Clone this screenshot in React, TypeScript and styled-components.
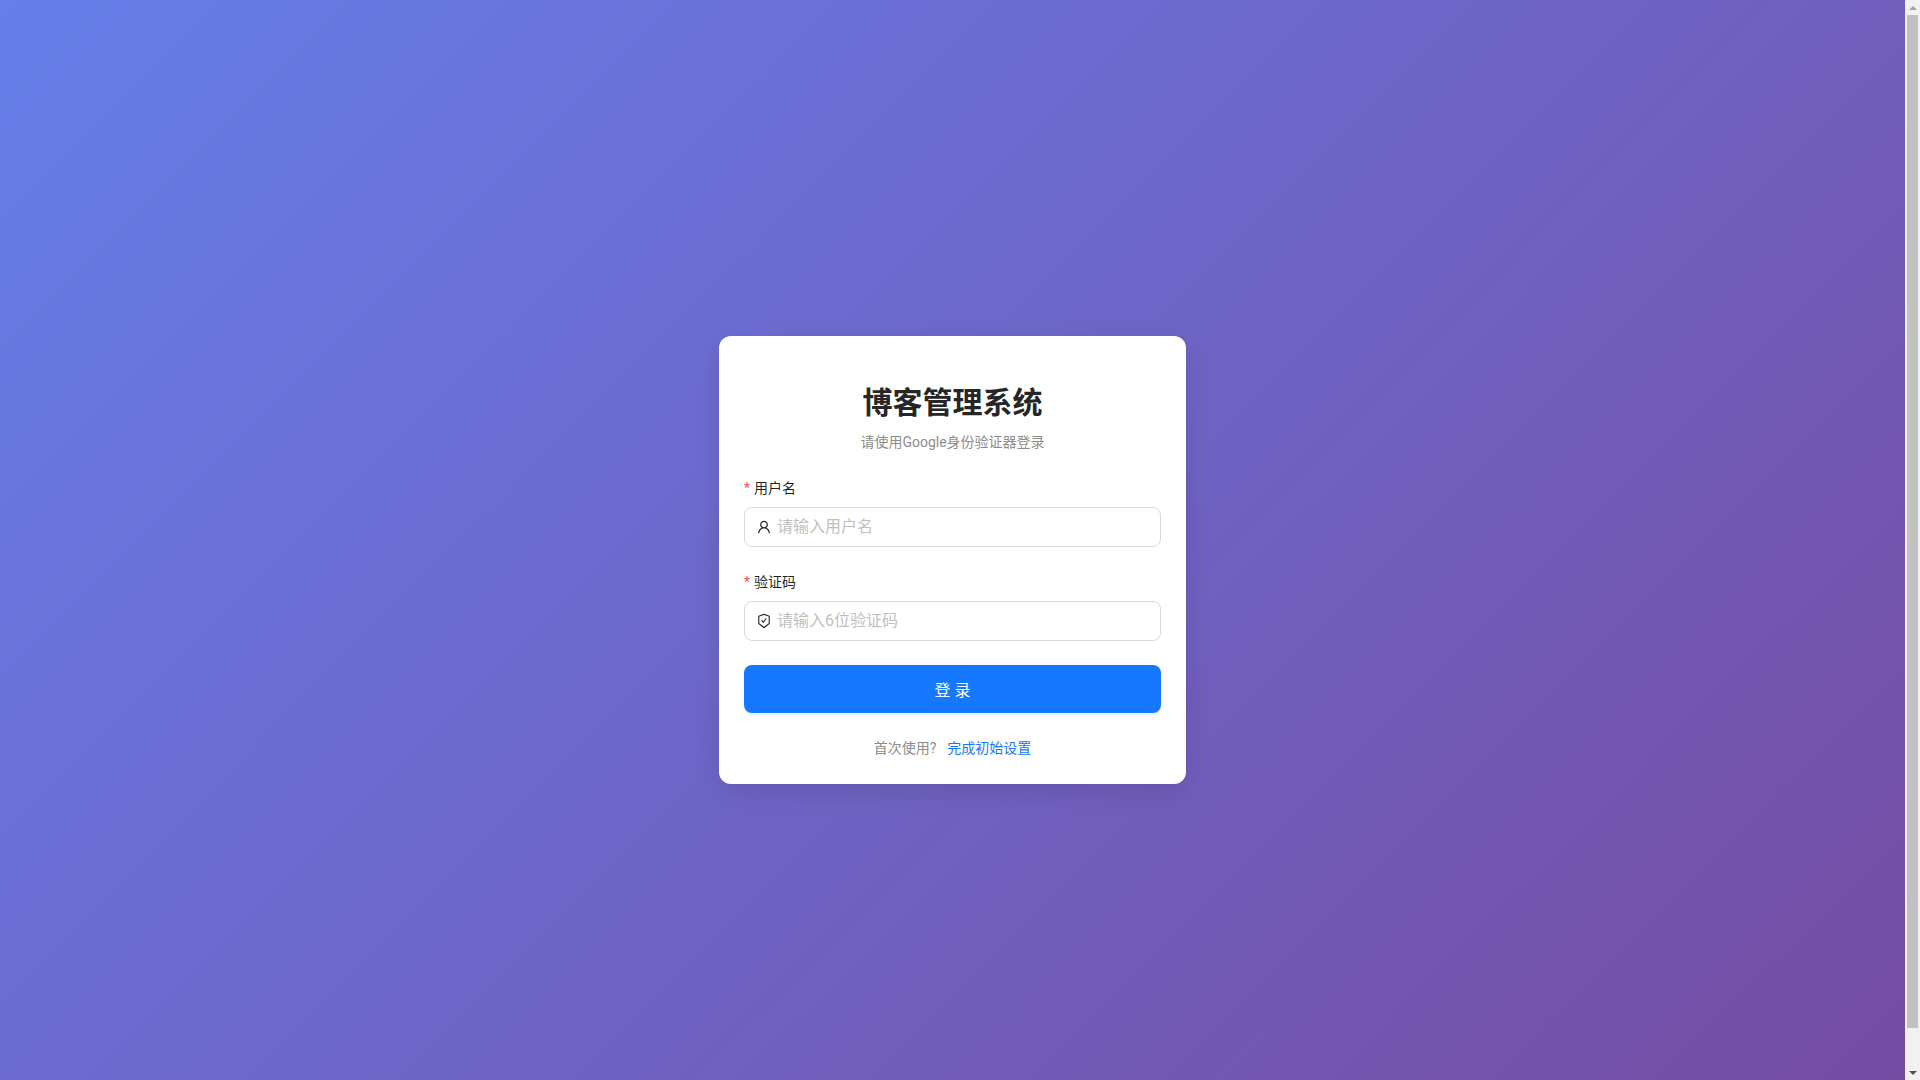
import React from 'react';
import styled, { createGlobalStyle } from 'styled-components';
import { AiOutlineUser, AiOutlineSafetyCertificate } from 'react-icons/ai';

const GlobalStyle = createGlobalStyle`
  html,
  body {
    height: 100%;
    overflow: hidden;
  }

  body {
    margin: 0;
    font-family: Roboto, "Noto Sans CJK SC", sans-serif;
    font-size: 14px;
  }
`;

const Viewport = styled.div`
  display: flex;
  height: 100vh;
  overflow: hidden;
`;

const Main = styled.main`
  flex: 1;
  min-width: 0;
  overflow: hidden;
`;

const Page = styled.div`
  display: flex;
  justify-content: center;
  align-items: center;
  min-height: 1080px;
  padding: 20px;
  background: linear-gradient(135deg, #667eea 0%, #764ba2 100%);
`;

const Card = styled.div`
  width: 467px;
  box-sizing: border-box;
  padding: 48px 25px 25px;
  background: #fff;
  border-radius: 12px;
  box-shadow: 0 8px 24px rgba(0, 0, 0, 0.1);
`;

const Header = styled.div`
  text-align: center;
  margin-bottom: 24px;
`;

const Title = styled.h1`
  margin: 0 0 9px;
  font-size: 30px;
  line-height: 38px;
  font-weight: 700;
  color: #262626;
`;

const Subtitle = styled.p`
  margin: 0;
  font-size: 14px;
  line-height: 22px;
  color: #8c8c8c;
`;

const Field = styled.div`
  margin-bottom: 24px;
`;

const Label = styled.label`
  display: block;
  height: 22px;
  margin-bottom: 8px;
  line-height: 22px;
  color: rgba(0, 0, 0, 0.88);

  &::before {
    content: '*';
    margin-right: 4px;
    color: #ff4d4f;
  }
`;

const InputBox = styled.div`
  display: flex;
  align-items: center;
  gap: 4px;
  height: 40px;
  box-sizing: border-box;
  padding: 0 11px;
  border: 1px solid #d9d9d9;
  border-radius: 8px;
  background: #fff;

  svg {
    width: 16px;
    height: 16px;
    flex: none;
    color: #262626;
  }
`;

const Input = styled.input`
  flex: 1;
  min-width: 0;
  padding: 0 0 2px 1px;
  border: 0;
  outline: 0;
  font: inherit;
  font-size: 16px;
  color: #262626;

  &::placeholder {
    color: #bfbfbf;
  }
`;

const SubmitButton = styled.button`
  display: block;
  width: 100%;
  height: 48px;
  border: 0;
  border-radius: 8px;
  background: #1677ff;
  box-shadow: 0 2px 0 rgba(5, 145, 255, 0.1);
  color: #fff;
  font: inherit;
  font-size: 16px;
`;

const Footer = styled.div`
  display: flex;
  justify-content: center;
  gap: 11px;
  margin-top: 24px;
  line-height: 22px;
  color: #8c8c8c;
`;

const SetupLink = styled.a`
  color: #1677ff;
  text-decoration: none;
`;

const ScrollBar = styled.div`
  display: flex;
  flex-direction: column;
  flex: none;
  width: 15px;
  background: #f1f1f1;
`;

const ScrollButton = styled.div`
  display: flex;
  flex: none;
  align-items: center;
  justify-content: center;
  height: 15px;
`;

const Arrow = styled.span<{ $down?: boolean }>`
  width: 0;
  height: 0;
  border-left: 4px solid transparent;
  border-right: 4px solid transparent;
  border-bottom: ${(props) => (props.$down ? '0' : '4px solid #a3a3a3')};
  border-top: ${(props) => (props.$down ? '4px solid #505050' : '0')};
`;

const ScrollTrack = styled.div`
  flex: 1;
`;

const ScrollThumb = styled.div`
  height: 1013px;
  margin: 0 2px;
  background: #c1c1c1;
`;

const App: React.FC = () => (
  <>
    <GlobalStyle />
    <Viewport>
      <Main>
        <Page>
          <Card>
            <Header>
              <Title>博客管理系统</Title>
              <Subtitle>请使用Google身份验证器登录</Subtitle>
            </Header>
            <form>
              <Field>
                <Label>用户名</Label>
                <InputBox>
                  <AiOutlineUser />
                  <Input placeholder="请输入用户名" />
                </InputBox>
              </Field>
              <Field>
                <Label>验证码</Label>
                <InputBox>
                  <AiOutlineSafetyCertificate />
                  <Input placeholder="请输入6位验证码" />
                </InputBox>
              </Field>
              <SubmitButton type="button">登 录</SubmitButton>
            </form>
            <Footer>
              <span>首次使用?</span>
              <SetupLink href="#">完成初始设置</SetupLink>
            </Footer>
          </Card>
        </Page>
      </Main>
      <ScrollBar>
        <ScrollButton>
          <Arrow />
        </ScrollButton>
        <ScrollTrack>
          <ScrollThumb />
        </ScrollTrack>
        <ScrollButton>
          <Arrow $down />
        </ScrollButton>
      </ScrollBar>
    </Viewport>
  </>
);

export default App;
